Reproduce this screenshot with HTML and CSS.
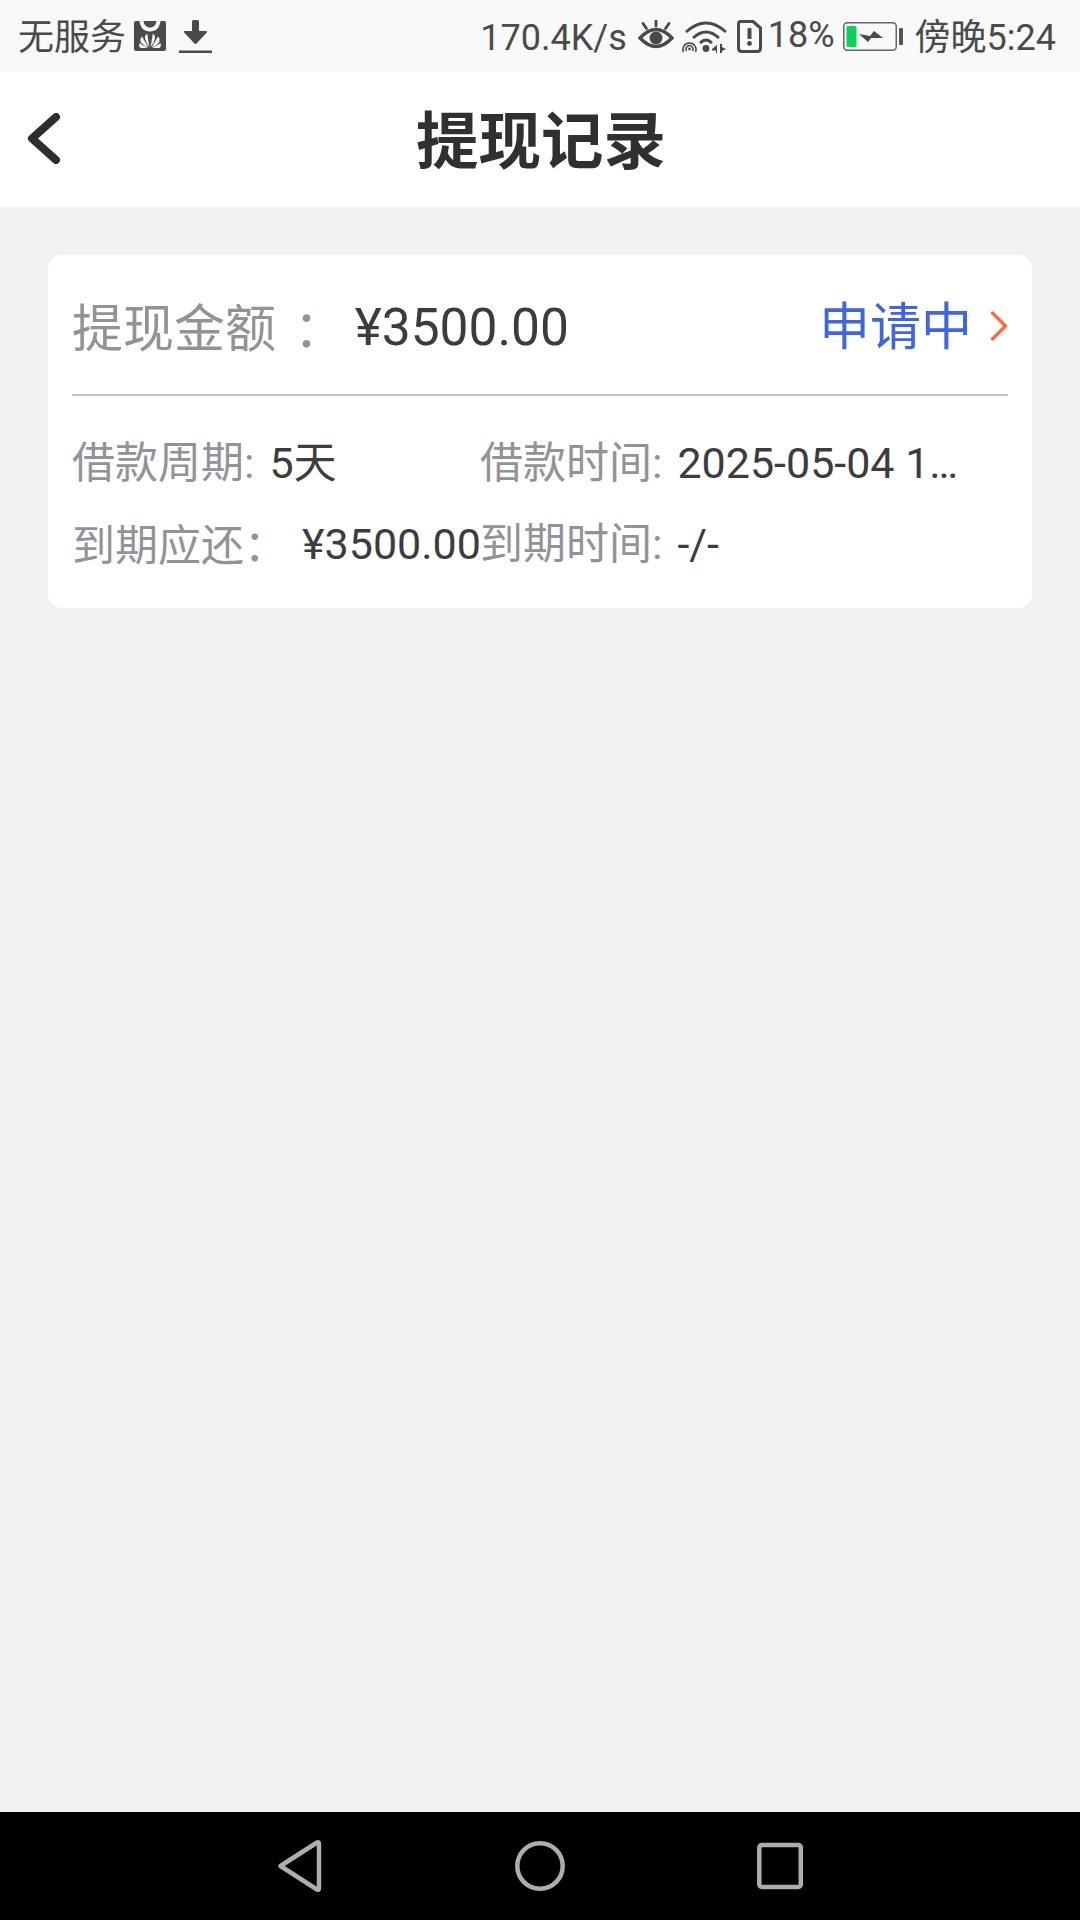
FILE: index.html
```html
<!DOCTYPE html>
<html lang="zh-CN">
<head>
  <meta charset="UTF-8">
  <meta name="viewport" content="width=device-width, initial-scale=1.0">
  <title>提现记录</title>
  <link rel="stylesheet" href="styles.css">
</head>
<body>
  <div class="status-bar">
    <div class="status-left">
      <span class="status-text">无服务</span>
      <svg class="icon-store" width="32" height="30" viewBox="0 0 32 30">
        <path d="M2 0H5.500C6.500 7 10 10.500 16 10.500S25.500 7 26.500 0H30Q32 0 32 2V28Q32 30 30 30H2Q0 30 0 28V2Q0 0 2 0Z" fill="#4a4a4a"/>
        <path d="M9.500 0C10 4 12.500 6.500 16 6.500S22 4 22.500 0Z" fill="#4a4a4a"/>
        <g fill="#f4f4f4">
          <path d="M15.400 26 13.200 12.500Q10.800 14 11 17.500 12 22 15.400 26Z"/>
          <path d="M16.600 26 18.800 12.500Q21.200 14 21 17.500 20 22 16.600 26Z"/>
          <path d="M14.400 26.500 8 15.500Q5.400 18 7 21.500 10 25 14.400 26.500Z"/>
          <path d="M17.600 26.500 24 15.500Q26.600 18 25 21.500 22 25 17.600 26.500Z"/>
          <path d="M13.500 27 5.400 22Q4.400 25 6.400 27Z"/>
          <path d="M18.500 27 26.600 22Q27.600 25 25.600 27Z"/>
        </g>
      </svg>
      <svg class="icon-download" width="33" height="33" viewBox="0 0 33 33">
        <path d="M13 1.500Q13 0 14.500 0H18.500Q20 0 20 1.500V11H27Q29 11 27.600 12.700L17.800 23.300Q16.500 24.700 15.200 23.300L5.400 12.700Q4 11 6 11H13Z" fill="#4a4a4a"/>
        <rect y="30.500" width="33" height="2.500" fill="#4a4a4a"/>
      </svg>
    </div>
    <div class="status-right">
      <span class="status-text">170.4K/s</span>
      <svg class="icon-eye" width="36" height="32" viewBox="0 0 36 32">
        <path d="M2 18Q18 1 34 18 18 35 2 18Z" fill="none" stroke="#4a4a4a" stroke-width="3.400"/>
        <circle cx="18" cy="18" r="6.500" fill="#4a4a4a"/>
        <path d="M18 0V6M5 3.500 8.500 8.500M31 3.500 27.500 8.500" stroke="#4a4a4a" stroke-width="2.800" stroke-linecap="round"/>
      </svg>
      <svg class="icon-wifi" width="45" height="33" viewBox="0 0 45 33">
        <g fill="none" stroke="#4a4a4a" stroke-width="2.800">
          <path d="M4 12Q24-6 44 12"/>
          <path d="M11 18Q24 6 37 18"/>
          <path d="M18 23Q24 17 30 23"/>
          <path d="M1.500 32A6.500 6.500 0 1 1 13.500 32" stroke-width="1.600"/>
          <path d="M4.500 31A3.500 3.500 0 1 1 10.500 31" stroke-width="1.400"/>
        </g>
        <circle cx="7.500" cy="29" r="1.400" fill="#4a4a4a"/>
        <circle cx="24" cy="28.500" r="3.400" fill="#4a4a4a"/>
        <path d="M30 29 35 25V33H34V30.500H30ZM38 24H40V27L44 29 40 31V33H38Z" fill="#4a4a4a"/>
      </svg>
      <svg class="icon-sim" width="25" height="33" viewBox="0 0 25 33">
        <path d="M3.500 1.500H16L23.500 8V28Q23.500 31.500 20.500 31.500H4.500Q1.500 31.500 1.500 28V4Q1.500 1.500 3.500 1.500Z" fill="none" stroke="#4a4a4a" stroke-width="3"/>
        <rect x="10.500" y="8" width="4" height="11" rx="1" fill="#4a4a4a"/>
        <circle cx="12.500" cy="23.500" r="2.400" fill="#4a4a4a"/>
      </svg>
      <span class="battery-text">18%</span>
      <svg class="icon-battery" width="60" height="29" viewBox="0 0 60 29">
        <rect x="0.750" y="0.750" width="52.500" height="27.500" rx="3.500" fill="none" stroke="#666" stroke-width="1.500"/>
        <rect x="3.500" y="4" width="10" height="21" rx="1.500" fill="#0cd05a"/>
        <path d="M16 12 27 14 31 9 40 16 28 16 25 20Z" fill="#4a4a4a"/>
        <rect x="56" y="6" width="4" height="17" rx="1" fill="#555"/>
      </svg>
      <span class="status-text clock">傍晚5:24</span>
    </div>
  </div>

  <header class="title-bar">
    <svg class="back-icon" width="34" height="51" viewBox="0 0 34 51">
      <path d="M29 4 5 25.500 29 47" fill="none" stroke="#2e2e2e" stroke-width="8" stroke-linecap="round" stroke-linejoin="round"/>
    </svg>
    <h1>提现记录</h1>
  </header>

  <main class="content">
    <section class="record-card">
      <div class="record-head">
        <span class="head-label">提现金额 <span class="tc-colon head-colon">：</span></span>
        <span class="head-amount">¥3500.00</span>
        <span class="head-status">申请中</span>
        <svg class="status-arrow" width="18" height="30" viewBox="0 0 18 30">
          <path d="M2.500 2 15.500 15 2.500 28" fill="none" stroke="#ff6a3d" stroke-width="3.400" stroke-linecap="round" stroke-linejoin="round"/>
        </svg>
      </div>
      <div class="record-grid">
        <div class="info-cell">
          <span class="info-label">借款周期:</span>
          <span class="info-value">5天</span>
        </div>
        <div class="info-cell">
          <span class="info-label">借款时间:</span>
          <span class="info-value">2025-05-04 1…</span>
        </div>
        <div class="info-cell">
          <span class="info-label">到期应还<span class="tc-colon">：</span></span>
          <span class="info-value">¥3500.00</span>
        </div>
        <div class="info-cell">
          <span class="info-label">到期时间:</span>
          <span class="info-value">-/-</span>
        </div>
      </div>
    </section>
  </main>

  <nav class="nav-bar">
    <svg width="60" height="60" viewBox="0 0 60 60">
      <path d="M10.500 30 47 6.500Q49 5.500 49 8V52Q49 54.500 47 53.500Z" fill="none" stroke="#adadad" stroke-width="4.500" stroke-linejoin="round"/>
    </svg>
    <svg width="60" height="60" viewBox="0 0 60 60">
      <circle cx="30" cy="30" r="22.700" fill="none" stroke="#adadad" stroke-width="4.500"/>
    </svg>
    <svg width="60" height="60" viewBox="0 0 60 60">
      <rect x="9.300" y="9" width="41.500" height="42" rx="2.500" fill="none" stroke="#adadad" stroke-width="4.500"/>
    </svg>
  </nav>
</body>
</html>
```

FILE: styles.css
```css
* {
  box-sizing: border-box;
}
body {
  margin: 0;
  width: 1080px;
  height: 1920px;
  display: flex;
  flex-direction: column;
  font-family: Roboto, "Noto Sans CJK SC", sans-serif;
  background-color: #f1f1f1;
}
svg {
  display: block;
  flex-shrink: 0;
}

/* status bar */
.status-bar {
  height: 72px;
  padding: 0 24px 0 18px;
  display: flex;
  justify-content: space-between;
  align-items: center;
  background-color: #f9f9f9;
  color: #4a4a4a;
  font-size: 36px;
  line-height: 42px;
}
.status-left,
.status-right {
  display: flex;
  align-items: center;
}
.status-text {
  padding-top: 4px;
}
.icon-store {
  margin-left: 8px;
}
.icon-download {
  margin-left: 13px;
}
.icon-eye {
  margin-left: 11px;
}
.icon-wifi {
  margin-left: 8px;
}
.icon-sim {
  margin-left: 10px;
}
.battery-text {
  margin-left: 6px;
  margin-bottom: 2px;
}
.icon-battery {
  margin-left: 8px;
}
.clock {
  margin-left: 12px;
}

/* title bar */
.title-bar {
  height: 135px;
  padding: 8px 0 0 2px;
  position: relative;
  display: flex;
  justify-content: center;
  align-items: center;
  background-color: #fff;
}
.title-bar h1 {
  margin: 0;
  font-size: 62.500px;
  font-weight: 700;
  color: #303030;
  line-height: 1;
}
.back-icon {
  position: absolute;
  left: 27px;
  top: 41px;
}

/* record card */
.content {
  flex: 1;
  padding: 48px 48px 0;
}
.record-card {
  height: 353px;
  padding: 0 24px;
  border-radius: 14px;
  background-color: #fff;
}
.record-head {
  height: 141px;
  padding-top: 6px;
  display: flex;
  align-items: center;
  border-bottom: 2px solid #c4c4c4;
  font-size: 51px;
  line-height: 60px;
}
.head-label {
  color: #929298;
}
.head-colon {
  margin-left: 5px;
}
.head-amount {
  margin-left: 10px;
  font-size: 51.500px;
  color: #3c3c3c;
}
.head-status {
  margin-left: auto;
  color: #3d65e4;
}
.status-arrow {
  margin-left: 18px;
  margin-bottom: 4px;
}
.tc-colon {
  font-family: "Noto Sans CJK TC", sans-serif;
}
.record-grid {
  margin-top: 26px;
  display: grid;
  grid-template-columns: 408px 1fr;
  grid-auto-rows: 81px;
  font-size: 43px;
  line-height: 50px;
}
.info-cell {
  display: flex;
  align-items: center;
  min-width: 0;
}
.info-label {
  color: #929298;
  white-space: nowrap;
}
.info-value {
  margin-left: 15px;
  color: #3c3c3c;
  white-space: nowrap;
}

/* navigation bar */
.nav-bar {
  height: 108px;
  display: flex;
  justify-content: center;
  align-items: center;
  gap: 180px;
  background-color: #000;
}
```
